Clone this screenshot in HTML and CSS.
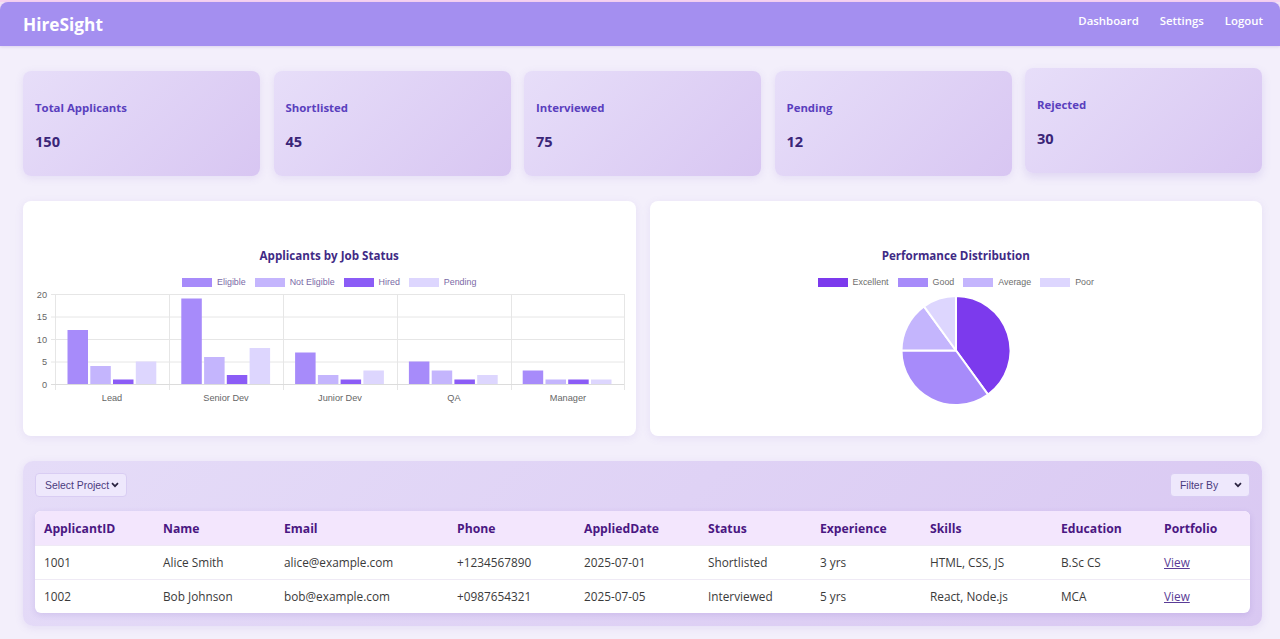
FILE: index.html
```html
<!DOCTYPE html>
<html lang="en">
<head>
<meta charset="utf-8">
<title>HireSight</title>
<link rel="stylesheet" href="styles.css">
</head>
<body>
<div class="topstrip">
  <header class="header">
    <div class="brand">HireSight</div>
    <nav class="nav">
      <a href="#">Dashboard</a>
      <a href="#">Settings</a>
      <a href="#">Logout</a>
    </nav>
  </header>
</div>

<main class="main">
  <section class="stats">
    <div class="stat"><div class="stat-title">Total Applicants</div><div class="stat-num">150</div></div>
    <div class="stat"><div class="stat-title">Shortlisted</div><div class="stat-num">45</div></div>
    <div class="stat"><div class="stat-title">Interviewed</div><div class="stat-num">75</div></div>
    <div class="stat"><div class="stat-title">Pending</div><div class="stat-num">12</div></div>
    <div class="stat lift"><div class="stat-title">Rejected</div><div class="stat-num">30</div></div>
  </section>

  <section class="charts">
    <div class="panel">
      <h3 class="chart-title">Applicants by Job Status</h3>
      <div class="legend bar-legend">
        <span class="lg"><i class="box c-elig"></i>Eligible</span>
        <span class="lg"><i class="box c-not"></i>Not Eligible</span>
        <span class="lg"><i class="box c-hired"></i>Hired</span>
        <span class="lg"><i class="box c-pend"></i>Pending</span>
      </div>
      <svg class="plot" width="613" height="148" viewBox="0 0 613 148">
        <g stroke="#e6e6e6" stroke-width="1">
          <line x1="28" y1="7.5" x2="601" y2="7.5"/>
          <line x1="28" y1="30" x2="601" y2="30"/>
          <line x1="28" y1="52.5" x2="601" y2="52.5"/>
          <line x1="28" y1="75" x2="601" y2="75"/>
          <line x1="32.5" y1="7" x2="32.5" y2="103"/>
          <line x1="146.5" y1="7" x2="146.5" y2="103"/>
          <line x1="260.5" y1="7" x2="260.5" y2="103"/>
          <line x1="374.5" y1="7" x2="374.5" y2="103"/>
          <line x1="488.5" y1="7" x2="488.5" y2="103"/>
          <line x1="601.5" y1="7" x2="601.5" y2="103"/>
        </g>
        <line x1="28" y1="97.5" x2="601" y2="97.5" stroke="#dcdcdc" stroke-width="1"/>
        <g class="ax" text-anchor="end">
          <text x="24" y="10.5">20</text>
          <text x="24" y="33">15</text>
          <text x="24" y="55.5">10</text>
          <text x="24" y="78">5</text>
          <text x="24" y="100.5">0</text>
        </g>
        <g class="ax" text-anchor="middle">
          <text x="89" y="114">Lead</text>
          <text x="203" y="114">Senior Dev</text>
          <text x="317" y="114">Junior Dev</text>
          <text x="431" y="114">QA</text>
          <text x="545" y="114">Manager</text>
        </g>
        <g fill="#a78bfa">
          <rect x="44.5" y="43" width="20.5" height="54"/>
          <rect x="158.3" y="11.5" width="20.5" height="85.5"/>
          <rect x="272.1" y="65.5" width="20.5" height="31.5"/>
          <rect x="385.9" y="74.5" width="20.5" height="22.5"/>
          <rect x="499.7" y="83.5" width="20.5" height="13.5"/>
        </g>
        <g fill="#c4b5fd">
          <rect x="67.3" y="79" width="20.5" height="18"/>
          <rect x="181.1" y="70" width="20.5" height="27"/>
          <rect x="294.9" y="88" width="20.5" height="9"/>
          <rect x="408.7" y="83.5" width="20.5" height="13.5"/>
          <rect x="522.5" y="92.5" width="20.5" height="4.5"/>
        </g>
        <g fill="#8b5cf6">
          <rect x="90" y="92.5" width="20.5" height="4.5"/>
          <rect x="203.8" y="88" width="20.5" height="9"/>
          <rect x="317.6" y="92.5" width="20.5" height="4.5"/>
          <rect x="431.4" y="92.5" width="20.5" height="4.5"/>
          <rect x="545.2" y="92.5" width="20.5" height="4.5"/>
        </g>
        <g fill="#ddd6fe">
          <rect x="112.8" y="74.5" width="20.5" height="22.5"/>
          <rect x="226.6" y="61" width="20.5" height="36"/>
          <rect x="340.4" y="83.5" width="20.5" height="13.5"/>
          <rect x="454.2" y="88" width="20.5" height="9"/>
          <rect x="568" y="92.5" width="20.5" height="4.5"/>
        </g>
      </svg>
    </div>

    <div class="panel">
      <h3 class="chart-title">Performance Distribution</h3>
      <div class="legend pie-legend">
        <span class="lg"><i class="box c-exc"></i>Excellent</span>
        <span class="lg"><i class="box c-elig"></i>Good</span>
        <span class="lg"><i class="box c-not"></i>Average</span>
        <span class="lg"><i class="box c-pend"></i>Poor</span>
      </div>
      <svg class="plot" width="612" height="148" viewBox="0 0 612 148">
        <g stroke="#ffffff" stroke-width="2" stroke-linejoin="round">
          <path fill="#7c3aed" d="M306 63.5 L306 9 A54.5 54.5 0 0 1 338.03 107.59 Z"/>
          <path fill="#a78bfa" d="M306 63.5 L338.03 107.59 A54.5 54.5 0 0 1 251.5 63.5 Z"/>
          <path fill="#c4b5fd" d="M306 63.5 L251.5 63.5 A54.5 54.5 0 0 1 273.97 19.41 Z"/>
          <path fill="#ddd6fe" d="M306 63.5 L273.97 19.41 A54.5 54.5 0 0 1 306 9 Z"/>
        </g>
      </svg>
    </div>
  </section>

  <section class="table-panel">
    <div class="toolbar">
      <div class="select select-project"><span>Select Project</span>
        <svg width="8" height="6" viewBox="0 0 8 6"><path d="M1 1.2 L4 4.2 L7 1.2" fill="none" stroke="#2a2340" stroke-width="1.7"/></svg>
      </div>
      <div class="select select-filter"><span>Filter By</span>
        <svg width="8" height="6" viewBox="0 0 8 6"><path d="M1 1.2 L4 4.2 L7 1.2" fill="none" stroke="#2a2340" stroke-width="1.7"/></svg>
      </div>
    </div>
    <div class="table-wrap">
      <table class="table">
        <colgroup>
          <col class="w-id"><col class="w-name"><col class="w-email"><col class="w-phone"><col class="w-date">
          <col class="w-status"><col class="w-exp"><col class="w-skills"><col class="w-edu"><col class="w-port">
        </colgroup>
        <thead>
          <tr><th>ApplicantID</th><th>Name</th><th>Email</th><th>Phone</th><th>AppliedDate</th><th>Status</th><th>Experience</th><th>Skills</th><th>Education</th><th>Portfolio</th></tr>
        </thead>
        <tbody>
          <tr><td>1001</td><td>Alice Smith</td><td>alice@example.com</td><td>+1234567890</td><td>2025-07-01</td><td>Shortlisted</td><td>3 yrs</td><td>HTML, CSS, JS</td><td>B.Sc CS</td><td><a href="#">View</a></td></tr>
          <tr><td>1002</td><td>Bob Johnson</td><td>bob@example.com</td><td>+0987654321</td><td>2025-07-05</td><td>Interviewed</td><td>5 yrs</td><td>React, Node.js</td><td>MCA</td><td><a href="#">View</a></td></tr>
        </tbody>
      </table>
    </div>
  </section>
</main>
</body>
</html>
```

FILE: styles.css
```css
* { box-sizing: border-box; }
html, body { margin: 0; padding: 0; }
body {
  background: #f3effb;
  font-family: "Open Sans", "Noto Sans", sans-serif;
  color: #333;
  height: 639px;
  overflow: hidden;
}
.topstrip {
  background: #f3e2f6;
  border-top: 2px solid #f6d2f1;
}
.header {
  height: 44px;
  background: #a48ff0;
  border-radius: 8px 8px 0 0;
  display: flex;
  align-items: center;
  justify-content: space-between;
  padding: 0 17px 0 23px;
  box-shadow: 0 1px 3px rgba(90, 60, 170, 0.15);
}
.brand {
  color: #fff;
  font-weight: 700;
  font-size: 17.3px;
}
.nav { display: flex; gap: 21px; margin-top: -7px; }
.nav a {
  color: #fff;
  text-decoration: none;
  font-weight: 600;
  font-size: 11.4px;
}
.main { padding: 25px 18px 0 23px; }

.stats {
  display: grid;
  grid-template-columns: repeat(5, 1fr);
  gap: 13.5px;
}
.stat {
  height: 105px;
  border-radius: 8px;
  background: linear-gradient(135deg, #e7def9 0%, #d8c6f2 100%);
  box-shadow: 0 2px 8px rgba(120, 90, 200, 0.12);
  padding: 28px 12px 0;
}
.stat.lift { transform: translateY(-3px); box-shadow: 0 4px 10px rgba(120, 90, 200, 0.16); }
.stat-title {
  font-size: 11.4px;
  font-weight: 700;
  color: #5a3fbe;
  line-height: 18px;
}
.stat-num {
  margin-top: 14px;
  font-size: 14.6px;
  font-weight: 700;
  color: #3a2578;
  line-height: 20px;
}

.charts {
  margin-top: 25px;
  display: grid;
  grid-template-columns: 1fr 1fr;
  gap: 14px;
}
.panel {
  height: 235px;
  background: #fff;
  border-radius: 8px;
  box-shadow: 0 2px 8px rgba(120, 90, 200, 0.10);
  padding-top: 46px;
  display: flex;
  flex-direction: column;
  align-items: center;
  overflow: hidden;
}
.chart-title {
  margin: 0;
  font-size: 11.6px;
  font-weight: 700;
  color: #3f2a85;
  line-height: 18px;
}
.legend {
  margin-top: 12px;
  height: 10px;
  display: flex;
  gap: 9px;
  font-family: "Liberation Sans", Arial, sans-serif;
  font-size: 8.9px;
  line-height: 10px;
}
.bar-legend { color: #7a6aa6; }
.pie-legend { color: #6d6d6d; }
.lg { display: flex; align-items: center; gap: 5px; white-space: nowrap; }
.box { display: block; width: 30px; height: 9px; }
.c-elig { background: #a78bfa; }
.c-not { background: #c4b5fd; }
.c-hired { background: #8b5cf6; }
.c-pend { background: #ddd6fe; }
.c-exc { background: #7c3aed; }
.plot { display: block; flex: none; }
.ax { font-family: "Liberation Sans", Arial, sans-serif; font-size: 9.2px; fill: #666; }

.table-panel {
  margin-top: 25px;
  border-radius: 10px;
  background: linear-gradient(135deg, #e5dcf8 0%, #d9c8f2 100%);
  box-shadow: 0 2px 8px rgba(120, 90, 200, 0.12);
  padding: 12px 12px 13px;
}
.toolbar {
  display: flex;
  justify-content: space-between;
  align-items: center;
}
.select {
  height: 24px;
  display: flex;
  align-items: center;
  justify-content: space-between;
  background: #eee8fc;
  border: 1px solid #d9cdf3;
  border-radius: 4px;
  padding: 0 7px 0 9px;
  font-family: "Liberation Sans", Arial, sans-serif;
  font-size: 10.4px;
  color: #4b3b7e;
}
.select-project { width: 92px; }
.select-filter { width: 80px; }
.table-wrap {
  margin-top: 14px;
  background: #fff;
  border-radius: 6px;
  box-shadow: 0 2px 6px rgba(100, 70, 180, 0.15);
  overflow: hidden;
}
.table {
  width: 100%;
  border-collapse: collapse;
  table-layout: fixed;
}
.w-id { width: 119px; }
.w-name { width: 121px; }
.w-email { width: 173px; }
.w-phone { width: 127px; }
.w-date { width: 124px; }
.w-status { width: 112px; }
.w-exp { width: 110px; }
.w-skills { width: 131px; }
.w-edu { width: 103px; }
.w-port { width: 95px; }
.table th, .table td {
  height: 34px;
  padding: 0 0 0 9px;
  text-align: left;
  white-space: nowrap;
}
.table th {
  background: #f3e6fd;
  color: #4a1782;
  font-weight: 700;
  font-size: 12.2px;
  padding-top: 1px;
}
.table td {
  font-size: 11.8px;
  color: #3a3a3a;
  border-top: 1px solid #efeaf5;
}
.table td a { color: #5a3c96; }
```
